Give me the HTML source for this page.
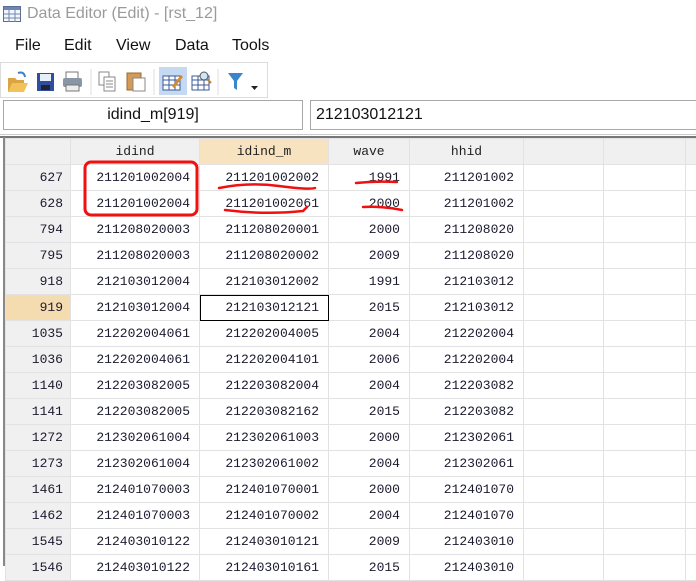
<!DOCTYPE html>
<html><head><style>
*{margin:0;padding:0;box-sizing:border-box}
body{width:696px;height:566px;overflow:hidden;background:#fff;font-family:"Liberation Sans","Noto Sans CJK SC",sans-serif;position:relative}
.abs{position:absolute}
.title{left:27px;top:5px;font-size:16px;color:#9a9a9a}
.menu{top:37px;font-size:16px;color:#111}
.tb{left:0;top:62px;width:268px;height:36px;border:1px solid #dcdcdc;background:#fff}
.fb{top:100px;height:30px;border:1px solid #a8a8a8;background:#fff;font-size:16px;line-height:28px;color:#111}
table{position:absolute;left:5px;top:138px;border-collapse:collapse;font-family:"Liberation Mono",monospace;font-size:13px;color:#1a1a2e;table-layout:fixed;width:700px}
td{height:26px;border:1px solid #e2e2e2;text-align:right;padding-right:9px;white-space:nowrap;overflow:hidden}
tr.h td{background:#f0f0f0;text-align:center;padding:0;color:#222}
td.rn{background:#f0f0f0;padding-right:7px}
</style></head><body>
<svg class="abs" style="left:3px;top:6px" width="18" height="16"><rect x="0.5" y="0.5" width="17" height="15" fill="#f4f6fa" stroke="#5a6e96"/><rect x="1" y="1" width="16" height="3" fill="#6d86b8"/><path d="M1 8h16M1 12h16M6 4v12M12 4v12" stroke="#6d86b8"/></svg>
<div class="abs title">Data Editor (Edit) - [rst_12]</div>
<div class="abs menu" style="left:15px">File</div>
<div class="abs menu" style="left:64px">Edit</div>
<div class="abs menu" style="left:116px">View</div>
<div class="abs menu" style="left:175px">Data</div>
<div class="abs menu" style="left:232px">Tools</div>
<div class="abs tb"></div>
<svg class="abs" style="left:0;top:62px" width="270" height="36">
<path d="M8 16h7l2 2h7v12H8z" fill="#d9a441"/><path d="M8 30l4-9h16l-4 9z" fill="#f2c25a"/><path d="M18 11q6-2 7 4" stroke="#3b7fc4" fill="none" stroke-width="2"/>
<rect x="37" y="11" width="17" height="18" fill="#2f4f9e"/><rect x="40" y="12" width="11" height="7" fill="#e8eefa"/><rect x="41" y="23" width="9" height="5" fill="#223"/>
<rect x="66" y="10" width="12" height="7" fill="#fff" stroke="#777"/><rect x="63" y="16" width="19" height="9" rx="2" fill="#8a96a6"/><rect x="66" y="23" width="13" height="6" fill="#eee" stroke="#777"/>
<line x1="91" y1="7" x2="91" y2="33" stroke="#ddd"/>
<rect x="99" y="10" width="10" height="13" fill="#fff" stroke="#888"/><rect x="104" y="15" width="11" height="14" fill="#fff" stroke="#888"/><path d="M106 19h7M106 22h7M106 25h7" stroke="#888"/>
<rect x="127" y="11" width="14" height="17" fill="#d49a58" stroke="#9a6a30"/><rect x="133" y="16" width="12" height="13" fill="#fff" stroke="#888"/>
<line x1="154" y1="7" x2="154" y2="33" stroke="#ddd"/>
<rect x="159" y="5" width="28" height="28" fill="#c5daf2"/>
<rect x="163" y="14" width="17" height="14" fill="#fff" stroke="#3a5a98"/><path d="M163 18h17M163 23h17M169 14v14M175 14v14" stroke="#3a5a98"/><path d="M172 24l9-11 2 2-9 11z" fill="#d58a2a"/>
<rect x="192" y="14" width="17" height="14" fill="#fff" stroke="#3a5a98"/><path d="M192 18h17M192 23h17M198 14v14M204 14v14" stroke="#3a5a98"/><circle cx="204" cy="14" r="4" fill="#cfe6f8" stroke="#555"/><path d="M207 17l4 4" stroke="#c08030" stroke-width="2"/>
<line x1="218" y1="7" x2="218" y2="33" stroke="#ddd"/>
<path d="M228 11h15l-6 8v9l-3-2v-7z" fill="#3a86cc"/><path d="M251 24h7l-3.5 4z" fill="#222"/>
</svg>
<div class="abs fb" style="left:3px;width:300px;text-align:center">idind_m[919]</div>
<div class="abs fb" style="left:310px;width:390px;padding-left:5px">212103012121</div>
<div class="abs" style="left:0;top:134px;width:696px;height:1px;background:#ccc"></div>
<div class="abs" style="left:0;top:136px;width:696px;height:2px;background:#777"></div>
<div class="abs" style="left:3px;top:137px;width:2px;height:429px;background:#888"></div>
<table>
<colgroup><col style="width:65px"><col style="width:129px"><col style="width:129px"><col style="width:81px"><col style="width:114px"><col style="width:80px"><col style="width:82px"><col style="width:20px"></colgroup>
<tr class="h"><td></td><td>idind</td><td style="background:#f7e3c0">idind_m</td><td>wave</td><td>hhid</td><td></td><td></td><td></td></tr>
<tr><td class="rn">627</td><td>211201002004</td><td>211201002002</td><td>1991</td><td>211201002</td><td></td><td></td><td></td></tr>
<tr><td class="rn">628</td><td>211201002004</td><td>211201002061</td><td>2000</td><td>211201002</td><td></td><td></td><td></td></tr>
<tr><td class="rn">794</td><td>211208020003</td><td>211208020001</td><td>2000</td><td>211208020</td><td></td><td></td><td></td></tr>
<tr><td class="rn">795</td><td>211208020003</td><td>211208020002</td><td>2009</td><td>211208020</td><td></td><td></td><td></td></tr>
<tr><td class="rn">918</td><td>212103012004</td><td>212103012002</td><td>1991</td><td>212103012</td><td></td><td></td><td></td></tr>
<tr><td class="rn" style="background:#f5dcb0">919</td><td>212103012004</td><td style="outline:1px solid #000;outline-offset:-1px">212103012121</td><td>2015</td><td>212103012</td><td></td><td></td><td></td></tr>
<tr><td class="rn">1035</td><td>212202004061</td><td>212202004005</td><td>2004</td><td>212202004</td><td></td><td></td><td></td></tr>
<tr><td class="rn">1036</td><td>212202004061</td><td>212202004101</td><td>2006</td><td>212202004</td><td></td><td></td><td></td></tr>
<tr><td class="rn">1140</td><td>212203082005</td><td>212203082004</td><td>2004</td><td>212203082</td><td></td><td></td><td></td></tr>
<tr><td class="rn">1141</td><td>212203082005</td><td>212203082162</td><td>2015</td><td>212203082</td><td></td><td></td><td></td></tr>
<tr><td class="rn">1272</td><td>212302061004</td><td>212302061003</td><td>2000</td><td>212302061</td><td></td><td></td><td></td></tr>
<tr><td class="rn">1273</td><td>212302061004</td><td>212302061002</td><td>2004</td><td>212302061</td><td></td><td></td><td></td></tr>
<tr><td class="rn">1461</td><td>212401070003</td><td>212401070001</td><td>2000</td><td>212401070</td><td></td><td></td><td></td></tr>
<tr><td class="rn">1462</td><td>212401070003</td><td>212401070002</td><td>2004</td><td>212401070</td><td></td><td></td><td></td></tr>
<tr><td class="rn">1545</td><td>212403010122</td><td>212403010121</td><td>2009</td><td>212403010</td><td></td><td></td><td></td></tr>
<tr><td class="rn">1546</td><td>212403010122</td><td>212403010161</td><td>2015</td><td>212403010</td><td></td><td></td><td></td></tr>
</table>
<svg class="abs" style="left:0;top:0" width="696" height="566">
<rect x="85" y="162" width="112" height="53" rx="6" fill="none" stroke="#f01010" stroke-width="3"/>
<path d="M219 188q30-6 60-2t36 2" fill="none" stroke="#f01010" stroke-width="2.5" stroke-linecap="round"/>
<path d="M225 210q40 5 78 1l4-4" fill="none" stroke="#f01010" stroke-width="2.5" stroke-linecap="round"/>
<path d="M356 183q20-2 41-1" fill="none" stroke="#f01010" stroke-width="2.5" stroke-linecap="round"/>
<path d="M363 207q20-1 39 3" fill="none" stroke="#f01010" stroke-width="2.5" stroke-linecap="round"/>
</svg>
</body></html>
